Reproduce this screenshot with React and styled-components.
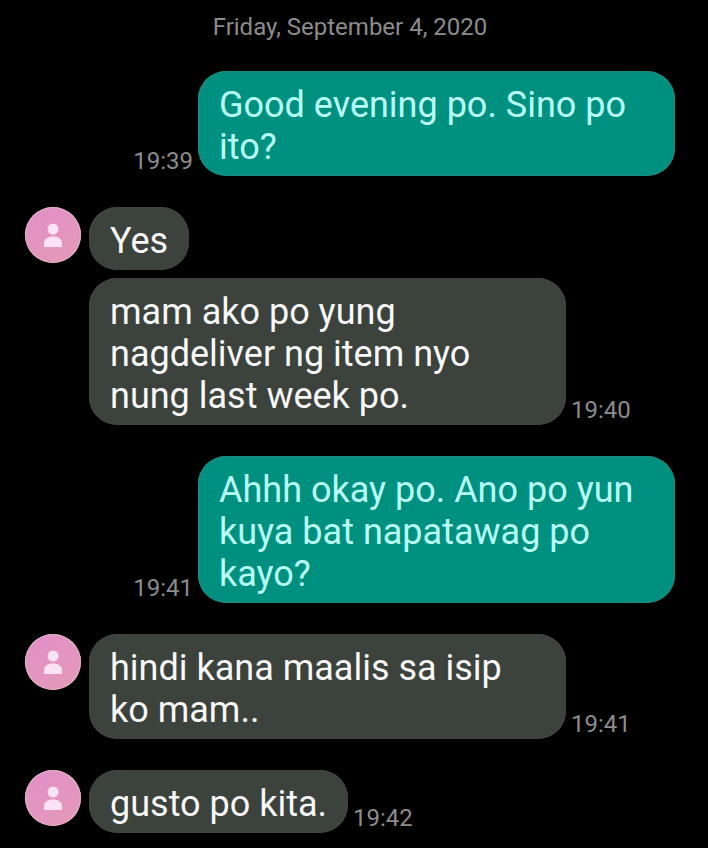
import styled, { createGlobalStyle } from "styled-components";

const GlobalStyle = createGlobalStyle`
    body {
        margin: 0;
        background: #000;
        font-family: Roboto, "Liberation Sans", sans-serif;
    }
`;

const Thread = styled.main`
    padding: 14px 33px 14px 25px;
`;

const DateLabel = styled.h1`
    margin: 0 0 31px;
    color: #8c8c8c;
    font-size: 24px;
    font-weight: 400;
    line-height: 26px;
    text-align: center;
`;

const Group = styled.section`
    display: flex;
    gap: 8px;

    & + & {
        margin-top: 31px;
    }
`;

const Avatar = styled.div`
    box-sizing: border-box;
    flex: none;
    width: 56px;
    height: 56px;
    border-radius: 50%;
    background: linear-gradient(150deg, #e08fc8, #e59ab8);
    box-shadow: inset 0 0 0 1px #e4b2c8;

    svg {
        display: block;
    }
`;

const Stack = styled.div`
    display: flex;
    flex: 1;
    flex-direction: column;
    gap: 8px;
`;

const Row = styled.div`
    display: flex;
    flex-direction: ${({ $sent }) => ($sent ? "row-reverse" : "row")};
    align-items: flex-end;
    gap: 5px;
`;

const Bubble = styled.p`
    box-sizing: border-box;
    max-width: 477px;
    margin: 0;
    padding: 13px 21px 8px;
    border-radius: 28px;
    background: ${({ $sent }) => ($sent ? "#009080" : "#3c423c")};
    box-shadow: inset 0 0 2px 1px ${({ $sent }) => ($sent ? "#208c7e" : "#464646")};
    color: ${({ $sent }) => ($sent ? "#b8fff4" : "#f8f8f8")};
    font-size: 36px;
    line-height: 42px;
`;

const Time = styled.time`
    color: #8c8c8c;
    font-size: 24px;
    line-height: 30px;
`;

const groups = [
    { sent: true, messages: [{ text: "Good evening po. Sino po ito?", time: "19:39" }] },
    {
        messages: [
            { text: "Yes" },
            { text: "mam ako po yung nagdeliver ng item nyo nung last week po.", time: "19:40" },
        ],
    },
    { sent: true, messages: [{ text: "Ahhh okay po. Ano po yun kuya bat napatawag po kayo?", time: "19:41" }] },
    { messages: [{ text: "hindi kana maalis sa isip ko mam..", time: "19:41" }] },
    { messages: [{ text: "gusto po kita.", time: "19:42" }] },
];

const Person = () => (
    <Avatar>
        <svg width="56" height="56" viewBox="0 0 56 56" fill="#fbe3f5" aria-hidden="true">
            <circle cx="28" cy="22" r="5.5" />
            <path d="M19 40v-3.5C19 32 23 29.5 28 29.5s9 2.500 9 7V40z" />
        </svg>
    </Avatar>
);

const App = () => {
    return (
        <>
            <GlobalStyle />
            <Thread>
                <DateLabel>Friday, September 4, 2020</DateLabel>
                {groups.map(({ sent, messages }, i) => (
                    <Group key={i}>
                        {!sent && <Person />}
                        <Stack>
                            {messages.map(({ text, time }) => (
                                <Row key={text} $sent={sent}>
                                    <Bubble $sent={sent}>{text}</Bubble>
                                    {time && <Time>{time}</Time>}
                                </Row>
                            ))}
                        </Stack>
                    </Group>
                ))}
            </Thread>
        </>
    );
};

export default App;
